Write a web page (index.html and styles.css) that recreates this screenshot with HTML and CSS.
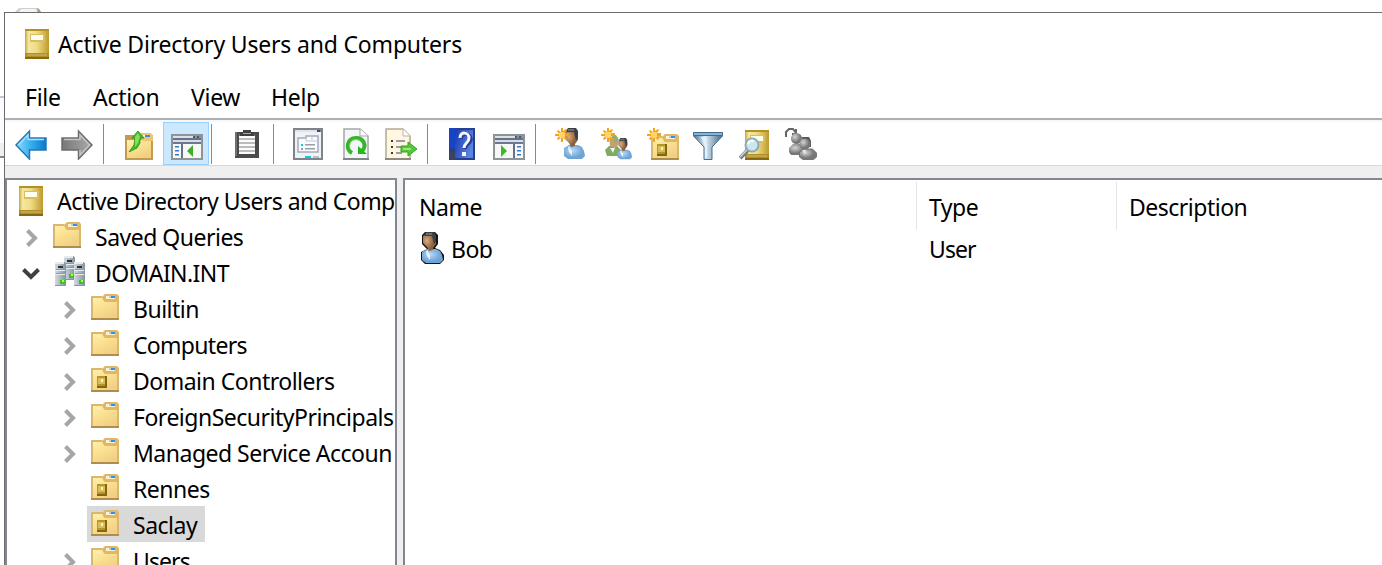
FILE: index.html
```html
<!DOCTYPE html>
<html lang="en">
<head>
<meta charset="utf-8">
<title>Active Directory Users and Computers</title>
<link rel="stylesheet" href="styles.css">
</head>
<body>
<svg class="defs" width="0" height="0" aria-hidden="true">
  <defs>
    <linearGradient id="gold"><stop offset="0" stop-color="#c9a63c"/><stop offset=".15" stop-color="#f5e7a2"/><stop offset=".5" stop-color="#eedb83"/><stop offset="1" stop-color="#bf9a2d"/></linearGradient>
    <linearGradient id="fold" x2=".6" y2="1"><stop offset="0" stop-color="#fff0ae"/><stop offset=".5" stop-color="#fae08f"/><stop offset="1" stop-color="#f1d085"/></linearGradient>
    <linearGradient id="blue" x2="1"><stop offset="0" stop-color="#8bdcff"/><stop offset=".5" stop-color="#38adef"/><stop offset="1" stop-color="#0879cf"/></linearGradient>
    <linearGradient id="gray" x2="1"><stop offset="0" stop-color="#777"/><stop offset="1" stop-color="#aaa"/></linearGradient>
    <linearGradient id="server" x2="1"><stop offset="0" stop-color="#d3dbe1"/><stop offset="1" stop-color="#8d99a3"/></linearGradient>
    <linearGradient id="funnel"><stop offset="0" stop-color="#486f93"/><stop offset=".4" stop-color="#dcedf8"/><stop offset="1" stop-color="#436687"/></linearGradient>
    <linearGradient id="help" x2="1" y2=".4"><stop offset="0" stop-color="#1739b7"/><stop offset="1" stop-color="#5c83df"/></linearGradient>
    <radialGradient id="skin" cx=".3" cy=".4"><stop offset="0" stop-color="#d9ab7d"/><stop offset="1" stop-color="#8a6240"/></radialGradient>
    <radialGradient id="shirt" cx=".4" cy=".4"><stop offset="0" stop-color="#b8d9f8"/><stop offset="1" stop-color="#6ea3d5"/></radialGradient>
    <radialGradient id="ball" cx=".35" cy=".35"><stop offset="0" stop-color="#d5d5d5"/><stop offset="1" stop-color="#777"/></radialGradient>

    <symbol id="book" viewBox="0 0 24 30">
      <path fill="url(#gold)" d="M0 0h24v30H0z"/>
      <path fill="#b49025" d="M0 0h24v2H0z"/><path fill="#b08d2a" d="M0 24h24v6H0z"/><path fill="#c4a548" d="M2 25h20v2H2z"/><path fill="#876813" d="M0 28h24v2H0z"/>
      <path fill="#d8bf5d" d="M5 5h15v8H5z"/><path fill="#fffef0" d="M6 6h12v5H6z"/>
    </symbol>
    <symbol id="folder" viewBox="0 0 28 26">
      <path fill="#dab76e" d="M0 2h11l3 2h14v22H0z"/>
      <path fill="url(#fold)" d="M2 4h9l3 3h12v17H2z"/>
      <path fill="#e0b765" d="M12 2l2-2h12l2 2v4l-2 2H14l-2-2z"/>
      <path fill="#fff2d0" d="M15 2h9v3h-9z"/><path fill="#b9cfe0" d="M18 2h3v2h-3z"/><path fill="#308fe8" d="M20 2h4v2h-4z"/>
      <path fill="#b18d4b" d="M0 24h28v2H0z"/>
    </symbol>
    <symbol id="ou" viewBox="0 0 28 26">
      <use href="#folder" width="28" height="26"/>
      <path fill="#b99528" d="M6 10h10v12H6z"/><path fill="#d8bd5b" d="M7 12h7v6H7z"/><path fill="#fff5bd" d="M10 13h2v3h-2z"/><path fill="#836515" d="M6 20h10v2H6zM14 10h2v11h-2z"/>
    </symbol>
    <symbol id="tower" viewBox="0 0 11 24" preserveAspectRatio="none">
      <path fill="#8a959e" d="M0 1h11v23H0z"/><path fill="url(#server)" d="M0 0h10v23H0z"/>
      <path fill="#e6edf2" d="M0 0h9v2H0zM0 8h10v1H0zM0 12h10v1H0z"/><path fill="#283540" d="M3 4h5v2H3z"/><path fill="#8f9aa3" d="M1 7h8v1H1zM1 11h8v1H1z"/>
      <path fill="#37c526" d="M5 18h5v4H5z"/><path fill="#b8ff29" d="M7 18h2v2H7z"/>
    </symbol>
    <symbol id="domain" viewBox="0 0 30 30">
      <use href="#tower" x="9" y="0" width="11" height="24"/>
      <use href="#tower" x="0" y="6" width="11" height="24"/>
      <use href="#tower" x="19" y="6" width="11" height="24"/>
    </symbol>
    <symbol id="spark" viewBox="0 0 14 14">
      <path fill="#f4a31c" d="M6 0h2v3l3-2 1 1-2 3h4v3h-4l2 3-1 1-3-2v4H6v-4l-3 2-1-1 2-3H0V6h4L2 3l1-1 3 2z"/><path fill="#ffd568" d="M5 4h4l1 1v4l-1 1H5L4 9V5z"/>
    </symbol>
    <symbol id="person" viewBox="0 0 24 32">
      <path fill="url(#shirt)" d="M2 20l5-3h9l4 2 2 4 1 5-3 3H6l-4-3z"/>
      <path fill="#eaf4fc" d="M6 20l1-2 3 5v5l-3-4z"/>
      <path fill="url(#skin)" d="M3 4l3-2h8l2 4v6l-3 4v2l-4 1-2-4-4-4z"/>
      <path fill="#3c3f43" d="M4 3l2-3h8l2 3v7l-2 2-1-4-1-4H5z"/><path fill="#6a6e72" d="M6 1h6v2H6z"/>
      <path fill="none" stroke="#84abd0" d="M18 23l2 3"/>
    </symbol>
    <symbol id="pane" viewBox="0 0 32 26">
      <path fill="#8d9496" d="M0 0h32v26H0z"/><path fill="#dce1e6" d="M2 2h20v2H2z"/><path fill="#4b5975" d="M22 2h2v2h-2zM26 2h2v2h-2z"/><path fill="#66728c" d="M2 4h28v2H2z"/><path fill="#d9dde3" d="M2 6h28v2H2z"/><path fill="#6d7892" d="M2 8h28v2H2z"/><path fill="#f6f8f8" d="M2 10h28v14H2z"/>
    </symbol>
    <symbol id="chevron" viewBox="0 0 12 18"><path d="M1.500 1.500L9 9l-7.500 7.500" fill="none" stroke="#a6a6a6" stroke-width="4"/></symbol>
    <symbol id="chevron-open" viewBox="0 0 18 12"><path d="M1.500 1.500L9 9l7.500-7.500" fill="none" stroke="#404040" stroke-width="4"/></symbol>
  </defs>
</svg>

<div class="desktop">
  <div class="behind">
    <svg class="behind-icon" viewBox="0 0 28 5"><path fill="#d0d0d0" d="M0 5l4-4h19l3 4z"/><path fill="#f6f4ef" d="M4 5l2-3h15l1 3z"/><path fill="#ab9b76" d="M22 1l2 1 2 3h-3z"/></svg>
    <div class="behind-body"></div>
    <div class="behind-bar"></div>
    <div class="behind-pane"></div>
  </div>
  <main class="window">
    <header class="titlebar">
      <svg class="book"><use href="#book"/></svg>
      <h1 class="title">Active Directory Users and Computers</h1>
    </header>
    <nav class="menu"><span class="m-file">File</span><span class="m-action">Action</span><span class="m-view">View</span><span>Help</span></nav>
    <div class="toolbar">
      <button class="tool" aria-label="Back"><svg viewBox="0 0 32 32"><path fill="url(#blue)" stroke="#2878b0" stroke-width="1.5" d="M1 17L14.500 3v7H31v12H14.500v9z"/><path fill="none" stroke="#a7e2fc" stroke-width="1.300" d="M3.500 17L13 7v4.500h16"/></svg></button>
      <button class="tool" aria-label="Forward"><svg viewBox="0 0 32 32"><path fill="url(#gray)" stroke="#6c6c6c" stroke-width="1.5" d="M31 17L17.500 3v7H1v12h16.500v9z"/><path fill="none" stroke="#c4c4c4" stroke-width="1.500" d="M3 11.500h16V7l9.500 10-9.500 10v-5"/></svg></button>
      <i class="sep"></i>
      <button class="tool" aria-label="Up"><svg viewBox="0 0 32 32"><path fill="#c29b4e" d="M2 7h28v25H2z"/><path fill="url(#fold)" d="M4 12h24v18H4z"/><path fill="#eac778" d="M18 5h10l2 3v5H19z"/><path fill="#fff3d5" d="M20 7h7v2h-7z"/><path fill="#378de0" d="M22 7h5v2h-5z"/><path fill="#43bd26" stroke="#298d20" stroke-width=".8" d="M9 10l6-7 6 7h-4v5l-3 5-8 4 5-7 1-7z"/><path fill="#80e452" d="M12 9l3-4 2 4-2 6-3 4z"/></svg></button>
      <button class="tool tool-active" aria-label="Show tree"><svg viewBox="0 0 32 32"><use href="#pane" y="6" width="32" height="26"/><path fill="#3878c4" d="M4 18h4v1.500H4zm0 4h4v1.500H4zm0 4h4v1.500H4z"/><path fill="#66728c" d="M10 16h2v14h-2z"/><path fill="#41ae2b" d="M16 23l6-6v12z"/></svg></button>
      <i class="sep"></i>
      <button class="tool" aria-label="Paste"><svg viewBox="0 0 32 32"><path fill="#4b4b4b" d="M4 4h24v26H4z"/><path fill="#707070" d="M4 4h2v24H4z"/><path fill="#fcfcfc" d="M8 7h16v19H8z"/><path fill="#777" d="M8 6h16v2H8z"/><path fill="#404040" d="M12 4V2h8v2h3v4H9V4z"/><path fill="#aaa" d="M12 5h8v1h-8z"/><path stroke="#bcbcbc" stroke-width="1.800" d="M8 11h16M8 15h16M8 19h16M8 23h16"/></svg></button>
      <i class="sep"></i>
      <button class="tool" aria-label="Properties"><svg viewBox="0 0 32 32"><path fill="#7f848b" d="M0 0h30v32H0z"/><path fill="#f0f3f6" d="M2 4h26v26H2z"/><path fill="#dfe4ec" d="M2 2h22v2H2z"/><path fill="#3b4a75" d="M24 2h3v2h-3z"/><path fill="#f9fbfd" stroke="#a2aaba" stroke-width="1.500" d="M5 10h8V8h12v16H5z"/><path fill="none" stroke="#c0c8d3" d="M13 9v4h11M19 9v3"/><path fill="#13c9ec" d="M8 16h2v2H8zm4 12h6v2h-6z"/><path fill="#999fa5" d="M8 20h2v2H8zm4-4h10v1.500H12zm0 4h10v1.500H12z"/><path fill="#b9bfc5" d="M20 28h6v2h-6z"/></svg></button>
      <button class="tool" aria-label="Refresh"><svg viewBox="0 0 32 32"><path fill="#f4f7f7" stroke="#a4a8a7" stroke-width="1.500" d="M5 1h16l8 7v23H5z"/><path fill="#7e8686" d="M4 30h26v2H4z"/><path fill="#fff" stroke="#a7a7a7" d="M21 1v7h8"/><path fill="none" stroke="#36b52a" stroke-width="4" d="M13 25C6 21 8 10 17 10c8 0 11 8 6 13"/><path fill="#25b81b" d="M19 18l9 8h-9z"/><path fill="none" stroke="#87db64" stroke-width="1" d="M11 20c-2-8 7-12 12-5"/></svg></button>
      <button class="tool" aria-label="Export list"><svg viewBox="0 0 32 32"><path fill="#fff7df" stroke="#b3a895" stroke-width="1.500" d="M1 1h17l7 7v23H1z"/><path fill="#8c8982" d="M0 30h26v2H0z"/><path fill="#fff" stroke="#b4b4b4" d="M18 1v7h7"/><path fill="#403b38" d="M6 12h2v2H6zm0 6h2v2H6zm0 6h2v2H6z"/><path stroke="#83799d" stroke-width="1.500" d="M11 13h9M11 19h6M11 25h6"/><path fill="#55c73b" stroke="#35a326" d="M16 18h7v-4l9 7-9 7v-4h-7z"/><path fill="#95eb6b" d="M18 20h8v2h-8z"/></svg></button>
      <i class="sep"></i>
      <button class="tool" aria-label="Help"><svg viewBox="0 0 32 32"><path fill="#24418f" d="M2 0h26v32H2z"/><path fill="url(#help)" d="M8 2h18v28H8z"/><path fill="#1744c4" d="M2 0h6v20H2z"/><path fill="#3c4360" d="M2 24h6v8H2z"/><path fill="none" stroke="#263d92" stroke-width="3.500" d="M14 11c0-7 10-6 10 0 0 5-6 5-6 10"/><path fill="none" stroke="#f7f8ff" stroke-width="3" d="M13 10c0-7 9-6 9 0 0 5-5 5-5 10"/><path fill="#f7f8ff" d="M15 24h4v4h-4z"/></svg></button>
      <button class="tool" aria-label="Show actions"><svg viewBox="0 0 32 32"><use href="#pane" y="6" width="32" height="26"/><path fill="#66728c" d="M20 16h2v14h-2z"/><path fill="#3878c4" d="M24 18h4v1.500h-4zm0 4h4v1.500h-4zm0 4h4v1.500h-4z"/><path fill="#41b52b" d="M8 17l6 6-6 6z"/></svg></button>
      <i class="sep"></i>
      <button class="tool" aria-label="New user"><svg viewBox="0 0 32 32"><use href="#person" x="7" width="24" height="32"/><use href="#spark" width="14" height="14"/></svg></button>
      <button class="tool" aria-label="New group"><svg viewBox="0 0 32 32"><path fill="#83aa64" d="M4 22l4-4h8l4 4v6H6z"/><path fill="#c0a371" d="M8 9h9v8l-3 3-5-2z"/><path fill="#91ad76" d="M10 7h5l3 5-3 3z"/><path fill="#f0f5e8" d="M9 20h5l-2 5z"/><use href="#person" x="15" y="10" width="17" height="22" /><use href="#spark" width="14" height="14"/></svg></button>
      <button class="tool" aria-label="New organizational unit"><svg viewBox="0 0 32 32"><use href="#ou" x="4" y="6" width="28" height="26"/><use href="#spark" width="14" height="14"/></svg></button>
      <button class="tool" aria-label="Filter"><svg viewBox="0 0 32 32"><path fill="url(#funnel)" stroke="#496b88" d="M.5 5h29v3L19 19v12.500h-8V19L.5 8z"/><path fill="#86b3d6" stroke="#446b8c" d="M.5 4.500h29v3H.5z"/><path fill="#e4f2fb" d="M8 9h5l1 8v12h-2V18z"/></svg></button>
      <button class="tool" aria-label="Find"><svg viewBox="0 0 32 32"><use href="#book" x="6" y="2" width="24" height="30"/><path stroke="#737b7d" stroke-width="4" d="M1 30l9-9"/><path stroke="#d5dce1" stroke-width="1.500" d="M1 29l8-8"/><circle cx="13" cy="17" r="6.500" fill="#cbe7ee" stroke="#8cabb2" stroke-width="2"/><path fill="none" stroke="#fff" stroke-width="2" d="M9 16c1-3 3-4 6-3"/></svg></button>
      <button class="tool" aria-label="Add to group"><svg viewBox="0 0 32 32"><path fill="none" stroke="#666" stroke-width="2" d="M1 9V4l3-3h4l3 4M7 6h4V1"/><path fill="url(#ball)" d="M4 20l4-4h9l4 4v7H6l-2-3z"/><circle cx="11.500" cy="10.500" r="5.500" fill="url(#ball)"/><path fill="#555" d="M17 9h7l2 4v6h-8z"/><circle cx="20" cy="16" r="5.500" fill="url(#ball)"/><path fill="url(#ball)" stroke="#777" d="M14.500 24l5-3h8l4 4v4l-3 2.500H18L14.500 29z"/><path fill="#e5e5e5" d="M17 22h4l-1 5z"/></svg></button>
    </div>
    <div class="content">
      <aside class="tree">
        <div class="row root"><svg class="book"><use href="#book"/></svg><span class="t-root">Active Directory Users and Comp</span></div>
        <div class="row one"><svg class="chev"><use href="#chevron"/></svg><svg class="folder"><use href="#folder"/></svg><span>Saved Queries</span></div>
        <div class="row one"><svg class="chev-open"><use href="#chevron-open"/></svg><svg class="domain"><use href="#domain"/></svg><span class="t-domain">DOMAIN.INT</span></div>
        <div class="row"><svg class="chev"><use href="#chevron"/></svg><svg class="folder"><use href="#folder"/></svg><span class="t-builtin">Builtin</span></div>
        <div class="row"><svg class="chev"><use href="#chevron"/></svg><svg class="folder"><use href="#folder"/></svg><span class="t-tight">Computers</span></div>
        <div class="row"><svg class="chev"><use href="#chevron"/></svg><svg class="folder"><use href="#ou"/></svg><span>Domain Controllers</span></div>
        <div class="row"><svg class="chev"><use href="#chevron"/></svg><svg class="folder"><use href="#folder"/></svg><span>ForeignSecurityPrincipals</span></div>
        <div class="row"><svg class="chev"><use href="#chevron"/></svg><svg class="folder"><use href="#folder"/></svg><span>Managed Service Accoun</span></div>
        <div class="row leaf"><svg class="folder"><use href="#ou"/></svg><span>Rennes</span></div>
        <div class="row leaf selected"><svg class="folder"><use href="#ou"/></svg><span>Saclay</span></div>
        <div class="row"><svg class="chev"><use href="#chevron"/></svg><svg class="folder"><use href="#folder"/></svg><span class="t-users">Users</span></div>
      </aside>
      <section class="list">
        <div class="head"><span class="c-name">Name</span><span class="c-type">Type</span><span class="c-desc">Description</span></div>
        <div class="item"><span class="c-name"><svg class="bob" viewBox="0 0 24 32"><path fill="#151515" d="M2 3l3-3h10l3 3v9l-3 4 5 2 4 5v5l-4 4H5l-4-4v-8l6-3-5-5z"/><use href="#person" width="24" height="32"/></svg><span class="label">Bob</span></span><span class="c-type label t-users">User</span></div>
      </section>
    </div>
  </main>
</div>
</body>
</html>
```
FILE: styles.css
```css
* { box-sizing: border-box; }
body {
  margin: 0;
  overflow: hidden;
  background: #fff;
  color: #000;
  font: 23px/32px "Noto Sans", "Open Sans", sans-serif;
  letter-spacing: -0.5px;
  white-space: nowrap;
}
svg { display: block; flex: none; }
.defs { position: absolute; }
.desktop { position: relative; height: 565px; padding: 12px 0 0 4px; overflow: hidden; }

/* Window peeking out behind the main one */
.behind { position: absolute; inset: 0; }
.behind-icon { width: 28px; height: 5px; margin: 7px 0 0 15px; }
.behind-body { height: 47px; margin-top: 84px; border-top: 2px solid #c5c7ce; background: #fbfcff; }
.behind-bar { height: 13px; background: #efefef; }
.behind-pane { height: 409px; border-top: 2px solid #828790; background: #fff; }

.window { position: relative; height: 553px; border: solid #6b6b6b; border-width: 1px 0 0 1px; background: #fff; }
.titlebar { display: flex; height: 62px; padding: 16px 0 0 20px; gap: 9px; }
.book { width: 24px; height: 30px; }
.title { margin: -1px 0 0; font-size: inherit; font-weight: 400; letter-spacing: -0.18px; }
.menu { display: flex; height: 45px; padding: 6px 0 0 20px; border-bottom: 2px solid #b0b0b0; letter-spacing: -0.3px; }
.m-file { width: 68px; }
.m-action { width: 98px; }
.m-view { width: 80px; }

.toolbar { display: flex; height: 46px; padding: 2px 0 0 3px; border-top: 2px solid #f3f8fd; border-bottom: 1px solid #d7d7d7; }
.tool { display: flex; align-items: flex-start; flex: none; width: 46px; height: 43px; margin: -2px 0 0; padding: 6px 0 0 7px; border: 0; background: none; }
.tool svg { width: 32px; height: 32px; }
.tool-active { margin: -2px -1px 0 1px; padding: 5px 0 0 7px; border: 1px solid #99d1ff; background: #cce8ff; }
.sep { flex: none; width: 1px; height: 40px; margin: 0 12px 0 3px; background: #8a8a8a; }

.content { display: flex; gap: 6px; height: 399px; padding-top: 12px; background: #efefef; }
.tree, .list { border: 2px solid #828790; border-bottom: 0; background: #fff; overflow: hidden; }
.tree { flex: none; width: 392px; padding: 2px 1px 0 0; }
.row { display: flex; align-items: flex-start; height: 36px; padding: 4px 0 0 57px; }
.row > span { margin: -1px 0 0 14px; }
.row .t-root { letter-spacing: -0.54px; }
.row .t-domain { margin-left: 12px; letter-spacing: -0.6px; }
.row .t-builtin { letter-spacing: -0.5px; }
.row .t-tight { letter-spacing: -0.7px; }
.t-users { letter-spacing: -0.9px; }
.row.root { padding-left: 12px; }
.row.one { padding-left: 19px; }
.row.leaf { width: max-content; margin-left: 80px; padding: 4px 8px 0 4px; }
.row.selected { background: #d9d9d9; }
.chev { width: 12px; height: 18px; margin: 7px 15px 0 0; }
.chev-open { width: 18px; height: 12px; margin: 10px 14px 0 -4px; }
.folder { width: 28px; height: 26px; }
.domain { width: 30px; height: 30px; margin: -2px -2px 0 1px; }

.list { flex: 1; border-right: 0; }
.head, .item { display: flex; }
.head { height: 50px; padding-top: 2px; }
.head > span { height: 48px; padding-top: 9px; }
.c-name { display: flex; width: 512px; padding-left: 15px; }
.c-type { width: 200px; padding-left: 12px; }
.c-desc { padding-left: 12px; }
.head .c-name, .head .c-type { border-right: 1px solid #e5e5e5; }
.head .c-name { padding-left: 14px; }
.item { padding-top: 2px; }
.label { padding-top: 1px; }
.bob { width: 24px; height: 32px; margin: 0 7px 0 0; }
```
